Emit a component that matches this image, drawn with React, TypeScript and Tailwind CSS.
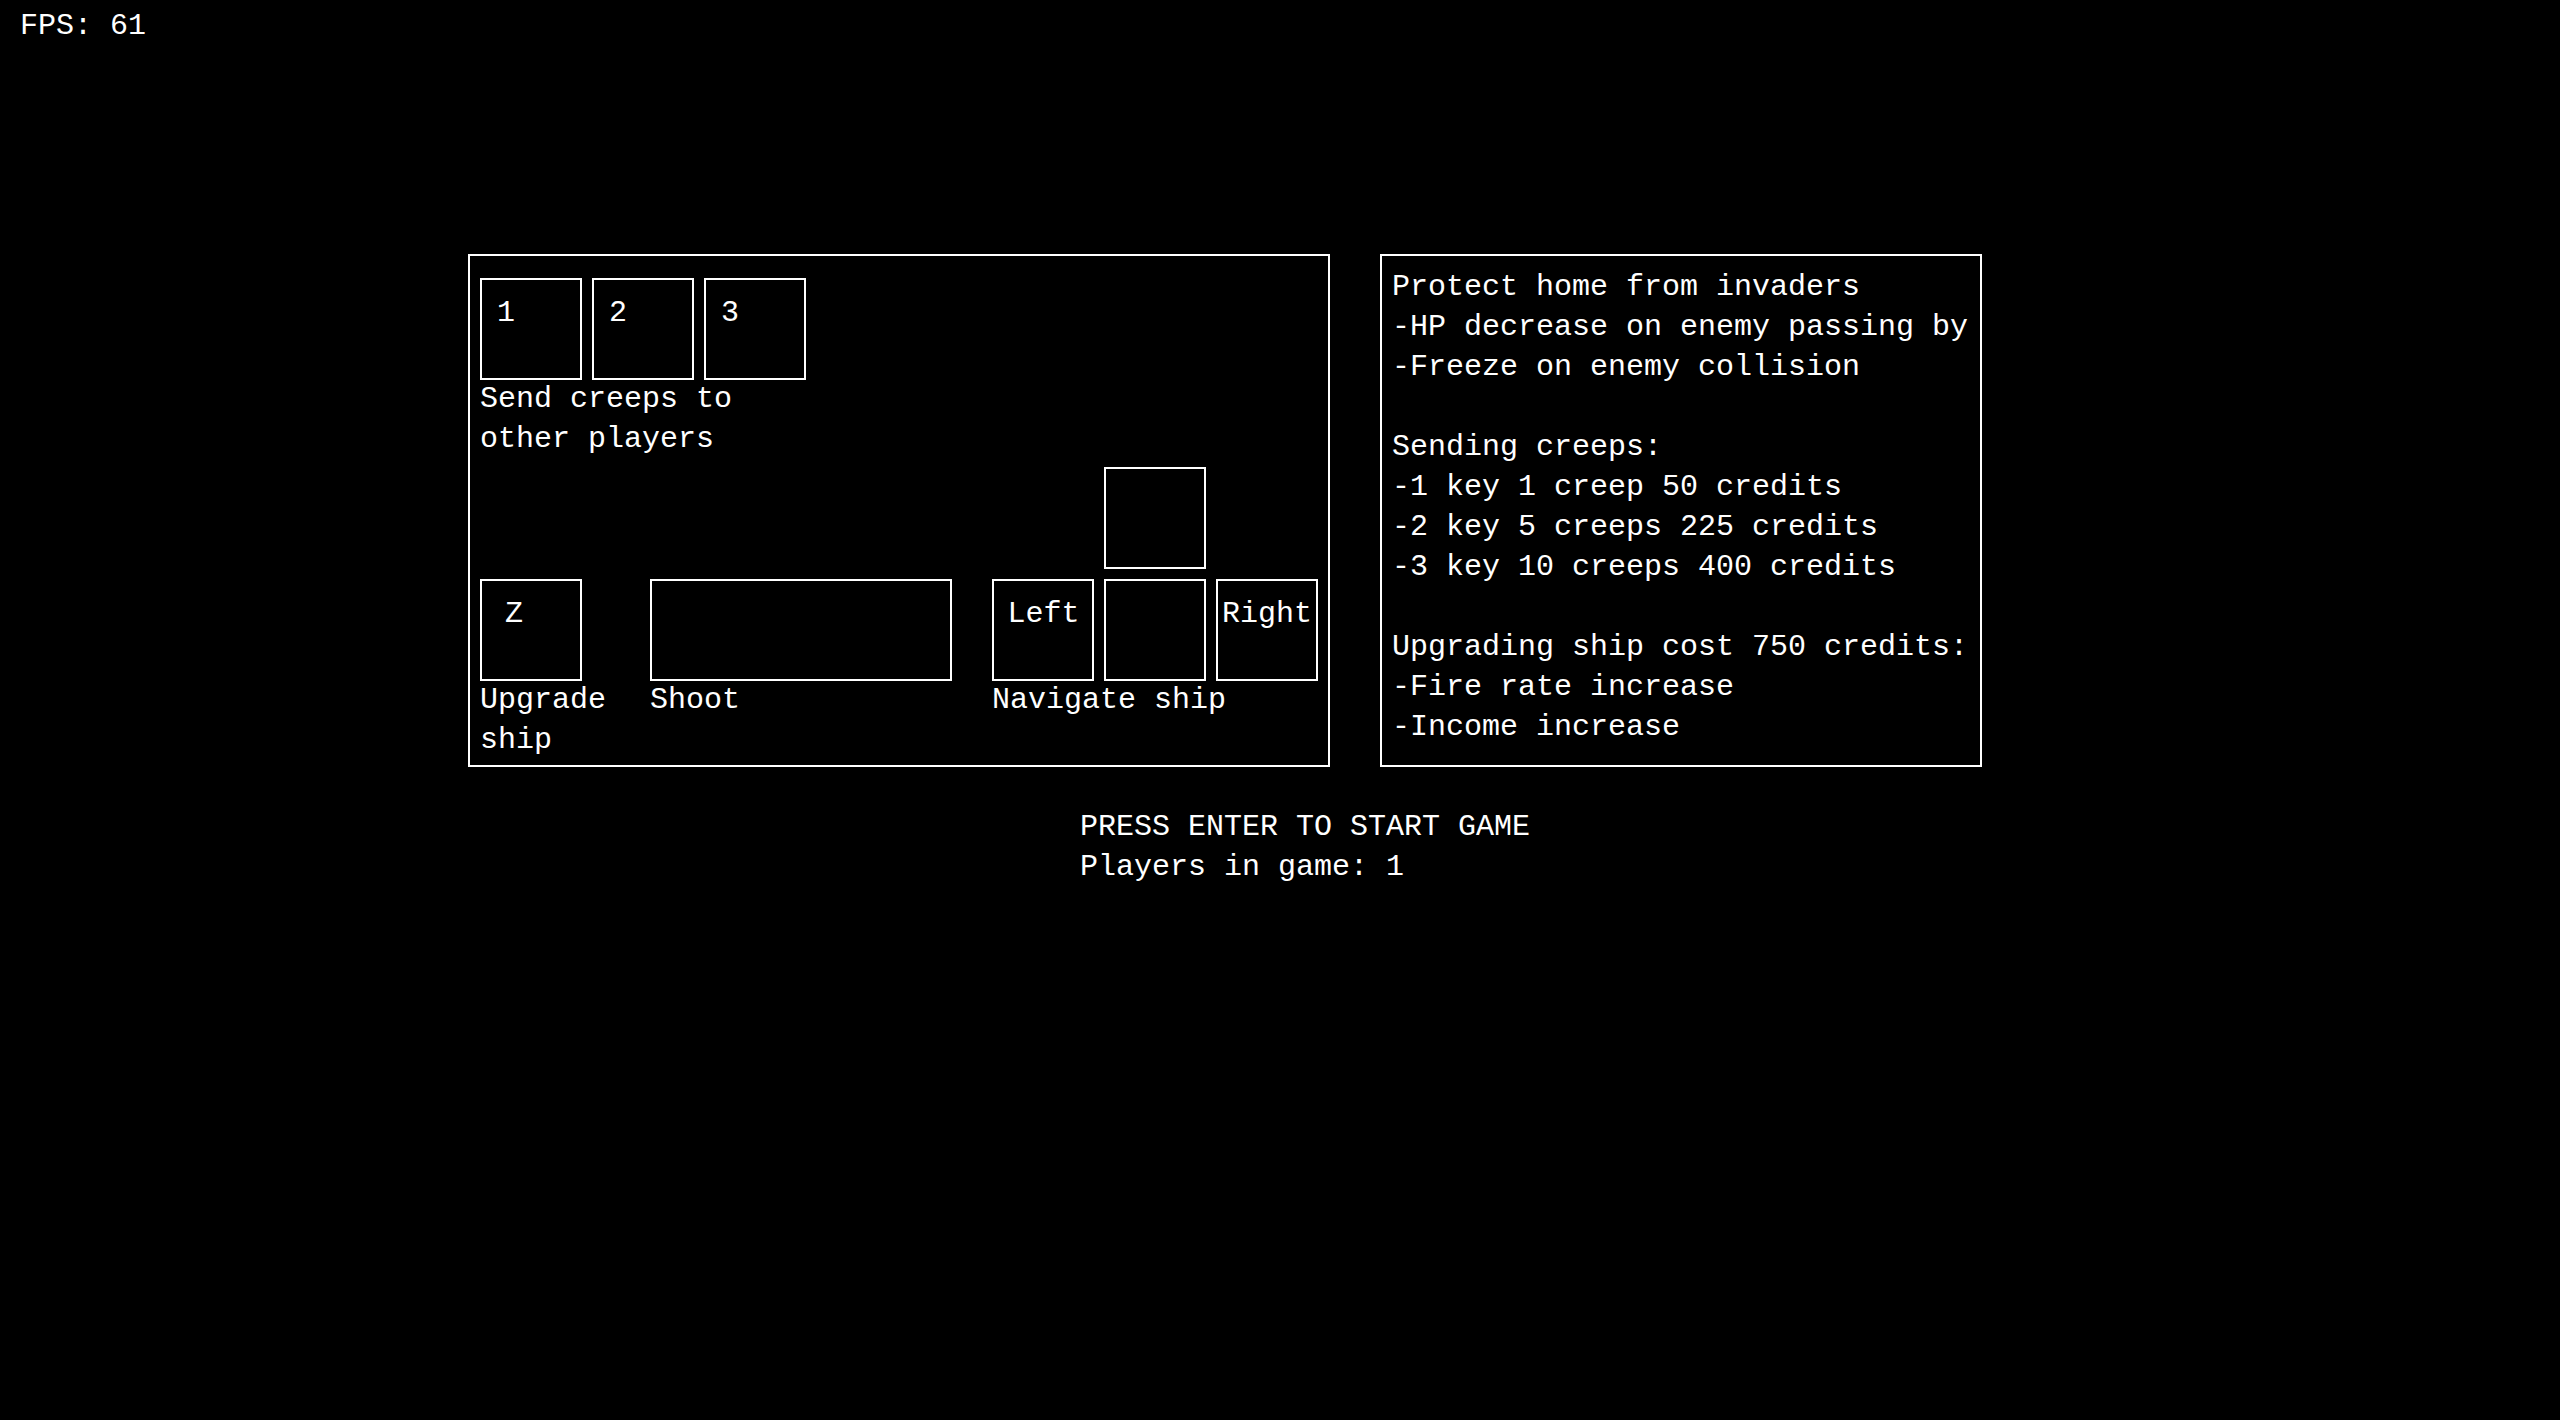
const infoLines = [
  'Protect home from invaders',
  '-HP decrease on enemy passing by',
  '-Freeze on enemy collision',
  '',
  'Sending creeps:',
  '-1 key 1 creep 50 credits',
  '-2 key 5 creeps 225 credits',
  '-3 key 10 creeps 400 credits',
  '',
  'Upgrading ship cost 750 credits:',
  '-Fire rate increase',
  '-Income increase',
]

type KeyProps = {
  label?: string
  className?: string
}

function Key({ label, className = '' }: KeyProps) {
  return (
    <div className={`h-[102px] w-[102px] shrink-0 border-2 border-white pt-[13px] ${className}`}>
      {label}
    </div>
  )
}

function ControlsPanel() {
  return (
    <div className="flex h-[513px] w-[862px] shrink-0 flex-col border-2 border-white pl-[10px] pt-[22px] pb-[5px]">
      <div>
        <div className="flex gap-[10px]">
          <Key label="1" className="pl-[15px]" />
          <Key label="2" className="pl-[15px]" />
          <Key label="3" className="pl-[15px]" />
        </div>
        <div className="-mt-[1px] w-[326px]">Send creeps to other players</div>
      </div>

      <div className="mt-auto flex items-start">
        <div className="mt-[112px] w-[102px]">
          <Key label="Z" className="pl-[23px]" />
          <div className="-mt-[1px]">Upgrade ship</div>
        </div>

        <div className="ml-[68px] mt-[112px] w-[302px]">
          <div className="h-[102px] w-[302px] border-2 border-white" />
          <div className="-mt-[1px]">Shoot</div>
        </div>

        <div className="ml-[40px] w-[326px]">
          <div className="grid grid-cols-[102px_102px_102px] gap-[10px]">
            <div />
            <Key />
            <div />
            <Key label="Left" className="pl-[1px] text-center" />
            <Key />
            <Key label="Right" className="text-center" />
          </div>
          <div className="-mt-[1px]">Navigate ship</div>
        </div>
      </div>
    </div>
  )
}

function InfoPanel() {
  return (
    <div className="h-[513px] w-[602px] shrink-0 border-2 border-white pl-[10px] pt-[11px]">
      {infoLines.map((line, i) => (
        <div key={i} className="h-[40px] whitespace-pre">
          {line}
        </div>
      ))}
    </div>
  )
}

export default function App() {
  return (
    <div className="h-[1420px] w-full overflow-hidden bg-black font-['Liberation_Mono','Courier_New',monospace] text-[30px] leading-[40px] text-white">
      <div className="pl-[20px] pt-[6px] whitespace-pre">FPS: 61</div>

      <div className="ml-[468px] mt-[208px] flex gap-[50px]">
        <ControlsPanel />
        <InfoPanel />
      </div>

      <div className="ml-[1080px] mt-[40px]">
        <div>PRESS ENTER TO START GAME</div>
        <div>Players in game: 1</div>
      </div>
    </div>
  )
}
